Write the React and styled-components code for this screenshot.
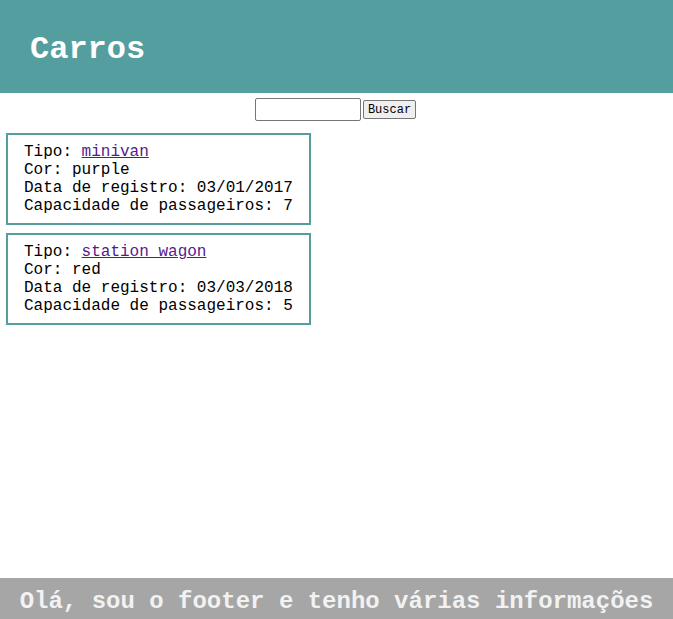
import React from 'react';
import styled, { createGlobalStyle } from 'styled-components';

const GlobalStyle = createGlobalStyle`
  html, body {
    margin: 0;
    padding: 0;
    background: #ffffff;
  }
  * {
    font-family: "Liberation Mono", "Courier New", monospace;
    box-sizing: border-box;
  }
`;

const cars = [
  { id: 1, tipo: 'minivan', cor: 'purple', data: '03/01/2017', capacidade: 7 },
  { id: 2, tipo: 'station wagon', cor: 'red', data: '03/03/2018', capacidade: 5 },
];

const Page = styled.div`
  min-height: 619px;
  display: flex;
  flex-direction: column;
`;

const Header = styled.header`
  height: 93px;
  background: #559e9f;
  display: flex;
  align-items: center;
  padding: 6px 0 0 30px;
  h1 {
    margin: 0;
    color: #ffffff;
    font-size: 32px;
    font-weight: 700;
  }
`;

const SearchBar = styled.form`
  display: flex;
  justify-content: center;
  align-items: center;
  gap: 2px;
  margin-top: 5px;
  padding-right: 2px;
  input {
    width: 106px;
    height: 23px;
    border: 1px solid #767676;
    border-radius: 2px;
    padding: 1px 2px;
  }
  button {
    height: 19px;
    font-size: 12px;
    padding: 0 4px;
    border: 1px solid #767676;
    border-radius: 2px;
    background: #efefef;
    color: #000;
  }
`;

const List = styled.div`
  display: flex;
  flex-direction: column;
  align-items: flex-start;
  gap: 8px;
  padding: 12px 6px;
`;

const Card = styled.div`
  border: 2px solid #559e9f;
  padding: 8px 16px;
  font-size: 16px;
  line-height: 18px;
  color: #000;
  a {
    color: #551a8b;
  }
`;

const Footer = styled.footer`
  margin-top: auto;
  height: 41px;
  background: #a6a6a6;
  display: flex;
  align-items: center;
  justify-content: center;
  padding-top: 5px;
  color: #f2f2f2;
  font-size: 24px;
  font-weight: 700;
`;

const App = () => {
  return (
    <Page>
      <GlobalStyle />
      <Header>
        <h1>Carros</h1>
      </Header>
      <SearchBar onSubmit={(e) => e.preventDefault()}>
        <input type="text" />
        <button type="submit">Buscar</button>
      </SearchBar>
      <List>
        {cars.map((car) => (
          <Card key={car.id}>
            <div>Tipo: <a href="#">{car.tipo}</a></div>
            <div>Cor: {car.cor}</div>
            <div>Data de registro: {car.data}</div>
            <div>Capacidade de passageiros: {car.capacidade}</div>
          </Card>
        ))}
      </List>
      <Footer>Olá, sou o footer e tenho várias informações</Footer>
    </Page>
  );
};

export default App;
